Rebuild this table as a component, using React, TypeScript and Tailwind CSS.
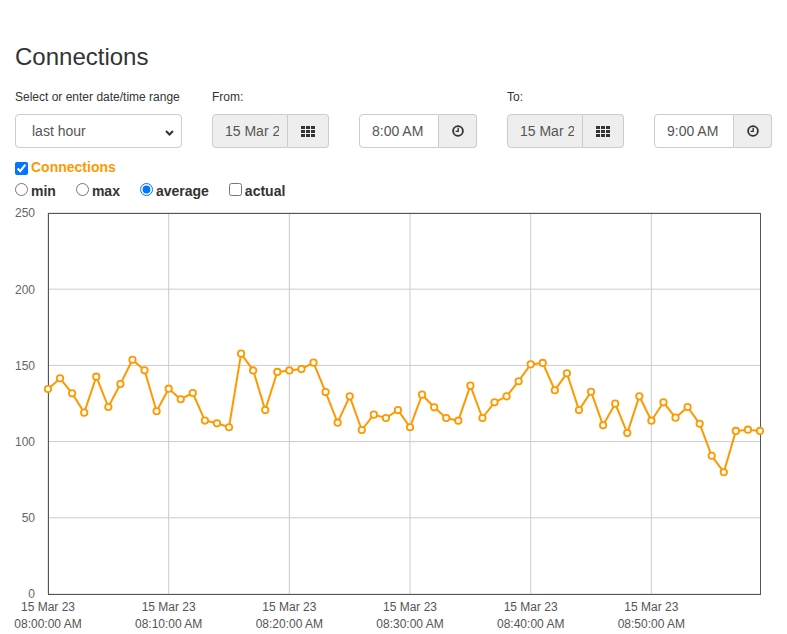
import { useState } from "react";

const values = [
	134.5, 141.5, 131.7, 119, 142.6, 122.7, 137.8, 153.7, 146.8, 119.9, 134.7,
	127.8, 131.9, 113.8, 112, 109.4, 157.7, 146.7, 120.7, 145.7, 146.7, 147.6,
	151.8, 132.5, 112.4, 129.7, 107.6, 117.7, 115.5, 120.7, 109.4, 130.8, 122.5,
	115.5, 113.7, 136.7, 115.5, 125.8, 129.7, 139.6, 150.7, 151.6, 133.7, 144.8,
	120.7, 132.7, 110.7, 124.9, 105.6, 129.7, 113.7, 125.8, 115.7, 122.7, 111.7,
	90.7, 79.9, 107, 107.8, 107,
];

const plot = { left: 48, right: 760, top: 12, bottom: 393 };
const yTicks = [0, 50, 100, 150, 200, 250];
const xTicks = ["08:00:00 AM", "08:10:00 AM", "08:20:00 AM", "08:30:00 AM", "08:40:00 AM", "08:50:00 AM"];

const px = (i: number) => plot.left + (i * (plot.right - plot.left)) / (values.length - 1);
const py = (v: number) => plot.bottom - (v / 250) * (plot.bottom - plot.top);

const GridIcon = () => (
	<svg width="14" height="11" viewBox="0 0 14 11" fill="#333">
		{[0, 5, 10].map((x) =>
			[0, 4, 8].map((y) => <rect key={`${x}-${y}`} x={x} y={y} width="4" height="3" />),
		)}
	</svg>
);

const ClockIcon = () => (
	<svg width="12" height="12" viewBox="0 0 12 12" fill="none" stroke="#333" strokeWidth="1.8">
		<circle cx="6" cy="6" r="4.9" />
		<path d="M6.2 2.8V6.4H3.6" strokeWidth="1.4" />
	</svg>
);

const DateGroup = () => (
	<div className="flex h-[34px] w-[117px]">
		<div className="flex w-[76px] items-center overflow-hidden rounded-l-[4px] border border-[#ccc] bg-[#eee] pl-[12px] text-[14px] text-[#555]">
			<span className="block w-[54px] overflow-hidden whitespace-nowrap">15 Mar 23 08:00</span>
		</div>
		<div className="flex w-[41px] items-center justify-center rounded-r-[4px] border border-l-0 border-[#ccc] bg-[#eee]">
			<GridIcon />
		</div>
	</div>
);

const TimeGroup = ({ time }: { time: string }) => (
	<div className="flex h-[34px] w-[118px]">
		<div className="flex w-[80px] items-center rounded-l-[4px] border border-[#ccc] bg-white pl-[12px] text-[14px] text-[#555]">
			{time}
		</div>
		<div className="flex w-[38px] items-center justify-center rounded-r-[4px] border border-l-0 border-[#ccc] bg-[#eee]">
			<ClockIcon />
		</div>
	</div>
);

export default function App() {
	const [mode, setMode] = useState("average");
	const line = values.map((v, i) => `${i ? "L" : "M"}${px(i).toFixed(1)} ${py(v).toFixed(1)}`).join(" ");

	return (
		<div className="min-h-[634px] bg-white pt-[44px] font-['Liberation_Sans',Arial,sans-serif] text-[#333]">
			<div className="px-[15px]">
				<h1 className="text-[24px] font-normal leading-[26.4px]">Connections</h1>

				{/* Range pickers */}
				<div className="mt-[19px] flex items-end gap-[30px]">
					<div className="w-[167px]">
						<div className="mb-[8px] text-[12px] leading-[17px]">Select or enter date/time range</div>
						<div className="relative flex h-[34px] items-center rounded-[4px] border border-[#ccc] bg-white pl-[16px] text-[14px] text-[#555]">
							last hour
							<svg className="absolute right-[7px] top-[15px]" width="9" height="6" viewBox="0 0 9 6" fill="none" stroke="#333" strokeWidth="2">
								<path d="M1 1l3.5 3.5L8 1" />
							</svg>
						</div>
					</div>
					<div>
						<div className="mb-[8px] text-[12px] leading-[17px]">From:</div>
						<DateGroup />
					</div>
					<TimeGroup time="8:00 AM" />
					<div>
						<div className="mb-[8px] text-[12px] leading-[17px]">To:</div>
						<DateGroup />
					</div>
					<TimeGroup time="9:00 AM" />
				</div>

				{/* Series toggle */}
				<label className="mt-[8px] flex h-[20px] items-start text-[14px] font-bold leading-[20px] text-[#ff9900]">
					<input type="checkbox" defaultChecked className="m-0 mt-[6px] h-[13px] w-[13px]" />
					<span className="ml-[3px] mt-[1px]">Connections</span>
				</label>
				<div className="mt-[5px] flex h-[20px] items-start gap-[20px] text-[14px] font-bold leading-[20px]">
					{["min", "max", "average"].map((m) => (
						<label key={m} className="flex items-start">
							<input
								type="radio"
								name="mode"
								checked={mode === m}
								onChange={() => setMode(m)}
								className="m-0 mt-[2px] h-[13px] w-[13px]"
							/>
							<span className="ml-[3px]">{m}</span>
						</label>
					))}
					<label className="flex items-start">
						<input type="checkbox" className="m-0 mt-[2px] h-[13px] w-[13px]" />
						<span className="ml-[3px]">actual</span>
					</label>
				</div>
			</div>

			{/* Chart */}
			<svg className="block" width="787" height="433" fontFamily="'Liberation Sans', Arial, sans-serif">
				{yTicks.map((t) => (
					<g key={t}>
						<line x1={plot.left} x2={plot.right} y1={py(t)} y2={py(t)} stroke="#ccc" />
						<text x="35" y={py(t) + 4.3} fontSize="12" fill="#666" textAnchor="end">
							{t}
						</text>
					</g>
				))}
				{xTicks.map((t, i) => {
					const x = px(i * 10);
					return (
						<g key={t}>
							<line x1={x} x2={x} y1={plot.top} y2={plot.bottom} stroke="#ccc" />
							<text x={x} y="410" fontSize="12" fill="#555" textAnchor="middle">
								15 Mar 23
							</text>
							<text x={x} y="427" fontSize="12" fill="#555" textAnchor="middle">
								{t}
							</text>
						</g>
					);
				})}
				<rect
					x={plot.left + 0.5}
					y={plot.top + 0.5}
					width={plot.right - plot.left}
					height={plot.bottom - plot.top}
					fill="none"
					stroke="#555"
				/>
				<path d={line} fill="none" stroke="#ff9900" strokeWidth="2" strokeLinejoin="round" />
				{values.map((v, i) => (
					<circle key={i} cx={px(i)} cy={py(v)} r="3.2" fill="#fff" stroke="#ff9900" strokeWidth="1.8" />
				))}
			</svg>
		</div>
	);
}
